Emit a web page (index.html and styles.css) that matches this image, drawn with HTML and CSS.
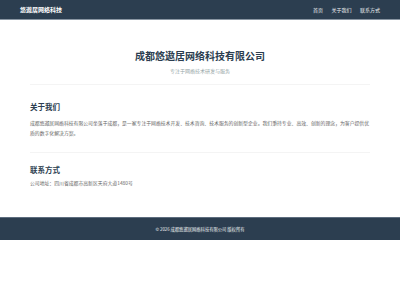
FILE: index.html
```html
<!DOCTYPE html>
<html lang="zh-CN">
<head>
    <meta charset="UTF-8">
    <meta name="viewport" content="width=device-width, initial-scale=1.0">
    <title>成都悠遨居网络科技有限公司</title>
    <link rel="stylesheet" href="styles.css">
</head>
<body>
    <!-- 顶部导航 -->
    <header class="site-header">
        <div class="logo">悠遨居网络科技</div>
        <nav class="navbar">
            <a href="#home">首页</a>
            <a href="#about">关于我们</a>
            <a href="#contact">联系方式</a>
        </nav>
    </header>

    <main class="container">
        <section class="hero" id="home">
            <h1>成都悠遨居网络科技有限公司</h1>
            <p class="tagline">专注于网络技术研发与服务</p>
        </section>

        <section class="block about" id="about">
            <h2>关于我们</h2>
            <p>成都悠遨居网络科技有限公司坐落于成都，是一家专注于网络技术开发、技术咨询、技术服务的创新型企业。我们秉持专业、高效、创新的理念，为客户提供优质的数字化解决方案。</p>
        </section>

        <section class="block contact" id="contact">
            <h2>联系方式</h2>
            <p>公司地址：四川省成都市高新区天府大道1480号</p>
        </section>
    </main>

    <footer class="site-footer">
        <p>&copy; 2026 成都悠遨居网络科技有限公司 版权所有</p>
    </footer>
</body>
</html>
```

FILE: styles.css
```css
/* General body styles */
body {
    margin: 0;
    padding: 0;
    font-family: 'Noto Sans CJK SC', 'Noto Sans', sans-serif;
    background-color: #fff;
    color: #555;
}

/* Header and navbar */
.site-header {
    box-sizing: border-box;
    height: 20px;
    padding: 0 20px;
    display: flex;
    justify-content: space-between;
    align-items: center;
    background-color: #2c3e50;
    border-bottom: 1px solid #8a96a3;
}

.logo {
    color: #fff;
    font-size: 6px;
    font-weight: 700;
}

.navbar {
    display: flex;
    gap: 8.5px;
}

.navbar a {
    color: #ecf0f1;
    text-decoration: none;
    font-size: 5px;
}

/* Main content */
.container {
    width: 340px;
    margin: 0 auto;
    padding-bottom: 29px;
}

.hero {
    text-align: center;
    padding: 29px 0 9px;
    border-bottom: 1px solid #f4f4f4;
}

.hero h1 {
    margin: 0;
    font-size: 10px;
    line-height: 14px;
    color: #2c3e50;
}

.tagline {
    margin: 4px 0 0;
    font-size: 5px;
    line-height: 8px;
    color: #95a5a6;
}

.block h2 {
    margin: 0;
    font-size: 7.5px;
    line-height: 10px;
    color: #2c3e50;
}

.block p {
    margin: 6px 0 0;
    font-size: 4.85px;
    line-height: 9.5px;
    color: #666;
}

.about {
    padding: 17px 0 15px;
    border-bottom: 1px solid #f4f4f4;
}

.contact {
    padding-top: 12px;
}

.contact p {
    margin-top: 3px;
}

/* Footer */
.site-footer {
    height: 22px;
    display: flex;
    align-items: center;
    justify-content: center;
    background-color: #2c3e50;
    border-top: 1px solid #5d6d7e;
}

.site-footer p {
    margin: 0;
    font-size: 4.3px;
    color: #ecf0f1;
}
```
